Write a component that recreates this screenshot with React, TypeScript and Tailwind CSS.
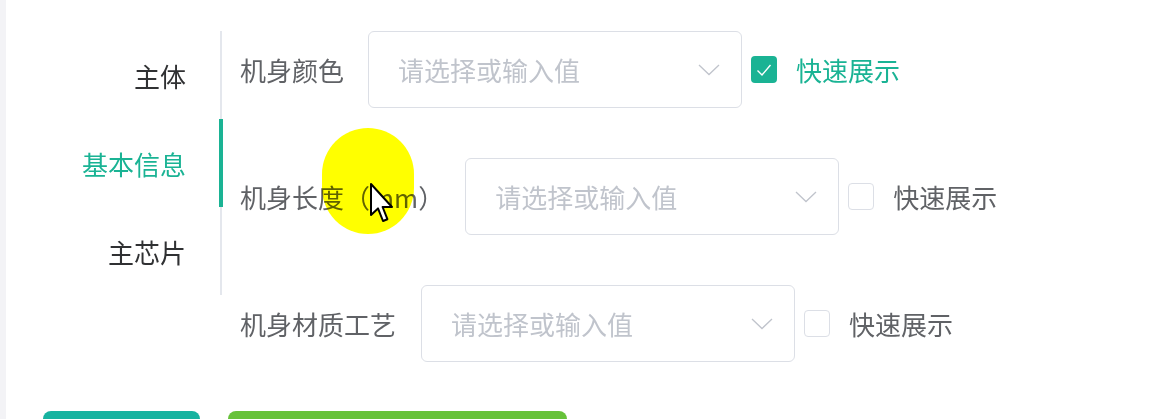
import React from "react";

const tabs = ["主体", "基本信息", "主芯片"];

const rows = [
  { label: "机身颜色", checked: true, gap: "mr-[24px]" },
  { label: "机身长度（mm）", checked: false, gap: "mr-[21px]" },
  { label: "机身材质工艺", checked: false, gap: "mr-[25px]" },
];

function Chevron() {
  return (
    <svg width="24" height="14" viewBox="0 0 24 14" fill="none">
      <path d="M2 2 L12 11.5 L22 2" stroke="#c0c4cc" strokeWidth="1.3" />
    </svg>
  );
}

function Checkbox({ checked }: { checked: boolean }) {
  if (checked) {
    return (
      <span className="w-[26px] h-[27px] rounded-[4px] bg-[#1ab394] flex items-center justify-center">
        <svg width="18" height="16" viewBox="0 0 18 16" fill="none">
          <path d="M2.5 8.5 L7 13 L15.5 3" stroke="#ffffff" strokeWidth="1.4" />
        </svg>
      </span>
    );
  }
  return <span className="w-[26px] h-[27px] rounded-[4px] border border-[#dcdfe6] bg-white" />;
}

export default function App() {
  return (
    <div
      className="relative flex h-[419px] bg-white overflow-hidden"
      style={{ fontFamily: '"Noto Sans CJK SC", "Noto Sans", sans-serif' }}
    >
      {/* left gray strip */}
      <div className="w-[6px] bg-[#f3f3f6] shrink-0" />

      <div className="flex-1 flex flex-col">
        <div className="flex pt-[31px]">
          {/* vertical tabs */}
          <div className="w-[216px] border-r-2 border-[#e4e7ed] self-start">
            {tabs.map((t, i) => (
              <div
                key={t}
                className={
                  "relative h-[88px] flex items-center justify-end pr-[34px] text-[26px] " +
                  (i === 1 ? "text-[#1ab394]" : "text-[#303133]")
                }
              >
                {t}
                {i === 1 && (
                  <span className="absolute right-[-3px] top-0 w-[4px] h-full bg-[#1ab394]" />
                )}
              </div>
            ))}
          </div>

          {/* form */}
          <div className="ml-[18px] flex flex-col gap-[50px]">
            {rows.map((r) => (
              <div key={r.label} className="flex items-center">
                <span className={"text-[26px] text-[#606266] whitespace-nowrap " + r.gap}>{r.label}</span>
                <div className="w-[374px] h-[77px] border border-[#dcdfe6] rounded-[6px] flex items-center justify-between pl-[29px] pr-[20px]">
                  <span className="text-[26px] text-[#c0c4cc]">请选择或输入值</span>
                  <Chevron />
                </div>
                <div className="ml-[9px] flex items-center">
                  <Checkbox checked={r.checked} />
                  <span
                    className={
                      "ml-[19px] text-[26px] " + (r.checked ? "text-[#1ab394]" : "text-[#606266]")
                    }
                  >
                    快速展示
                  </span>
                </div>
              </div>
            ))}
          </div>
        </div>

        {/* bottom buttons */}
        <div className="flex gap-[28px] pl-[37px] mt-[49px]">
          <div className="w-[157px] h-[50px] rounded-[8px] bg-[#17b3a0] shrink-0" />
          <div className="w-[339px] h-[50px] rounded-[8px] bg-[#67c23a] shrink-0" />
        </div>
      </div>

      {/* mouse highlight */}
      <div className="absolute left-[322px] top-[128px] w-[92px] h-[106px] rounded-full bg-[#ffff00] mix-blend-multiply pointer-events-none" />
      <svg
        className="absolute left-[369px] top-[182px] pointer-events-none"
        width="24"
        height="42"
        viewBox="0 0 12 21"
      >
        <path
          d="M1 1 L1 16.5 L4.5 13.2 L7 19.5 L9.2 18.6 L6.8 12.5 L11.5 12.5 Z"
          fill="#ffffff"
          stroke="#000000"
          strokeWidth="1"
          strokeLinejoin="round"
        />
      </svg>
    </div>
  );
}
